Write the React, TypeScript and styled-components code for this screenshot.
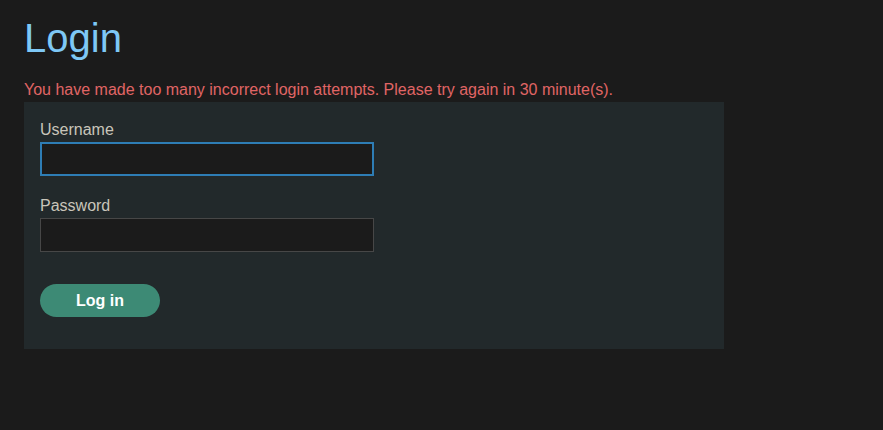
import styled, { createGlobalStyle } from 'styled-components';

const colors = {
  PAGE: '#1b1b1b',
  PANEL: '#22292b',
  FIELD: '#1b1b1b',
  FIELD_LINE: '#474747',
  FOCUS: '#2e7db5',
  LABEL: '#c9c5ba',
  TITLE: '#7ec8f6',
  ERROR: '#e06565',
  BUTTON: '#3d8a75',
  WHITE: '#ffffff',
};

const GlobalStyle = createGlobalStyle`
  html, body {
    margin: 0;
    padding: 0;
    background: ${colors.PAGE};
    font-family: "Liberation Sans", Arial, sans-serif;
  }
`;

const Page = styled.main`
  padding: 15px 24px;
  min-height: 430px;
  box-sizing: border-box;
`;

const Title = styled.h1`
  margin: 0 0 19px;
  font-size: 40px;
  font-weight: 400;
  line-height: 46px;
  color: ${colors.TITLE};
`;

const ErrorText = styled.p`
  margin: 0 0 2px;
  font-size: 16px;
  line-height: 20px;
  color: ${colors.ERROR};
`;

const Panel = styled.form`
  width: 700px;
  box-sizing: border-box;
  padding: 18px 16px 32px;
  background: ${colors.PANEL};
  display: flex;
  flex-direction: column;
`;

const Field = styled.div`
  display: flex;
  flex-direction: column;
  align-items: flex-start;
  margin-bottom: ${(props: { last?: boolean }) => (props.last ? '32px' : '20px')};
`;

const Label = styled.label`
  font-size: 16px;
  line-height: 20px;
  color: ${colors.LABEL};
  margin-bottom: 2px;
`;

const Input = styled.input`
  width: 334px;
  height: 34px;
  box-sizing: border-box;
  background: ${colors.FIELD};
  border: 1px solid ${(props: { focused?: boolean }) => (props.focused ? colors.FOCUS : colors.FIELD_LINE)};
  box-shadow: ${(props: { focused?: boolean }) => (props.focused ? `inset 0 0 0 1px ${colors.FOCUS}` : 'none')};
  color: ${colors.LABEL};
  font-family: inherit;
  font-size: 16px;
  padding: 0 8px;
  outline: none;
`;

const Button = styled.button`
  width: 120px;
  height: 33px;
  border: none;
  border-radius: 17px;
  background: ${colors.BUTTON};
  color: ${colors.WHITE};
  font-family: inherit;
  font-size: 16px;
  font-weight: 700;
  cursor: pointer;
`;

export default function App() {
  return (
    <>
      <GlobalStyle />
      <Page>
        <Title>Login</Title>
        <ErrorText>
          You have made too many incorrect login attempts. Please try again in 30 minute(s).
        </ErrorText>
        <Panel onSubmit={(e) => e.preventDefault()}>
          <Field>
            <Label htmlFor="username">Username</Label>
            <Input id="username" type="text" focused />
          </Field>
          <Field last>
            <Label htmlFor="password">Password</Label>
            <Input id="password" type="password" />
          </Field>
          <Button type="submit">Log in</Button>
        </Panel>
      </Page>
    </>
  );
}
